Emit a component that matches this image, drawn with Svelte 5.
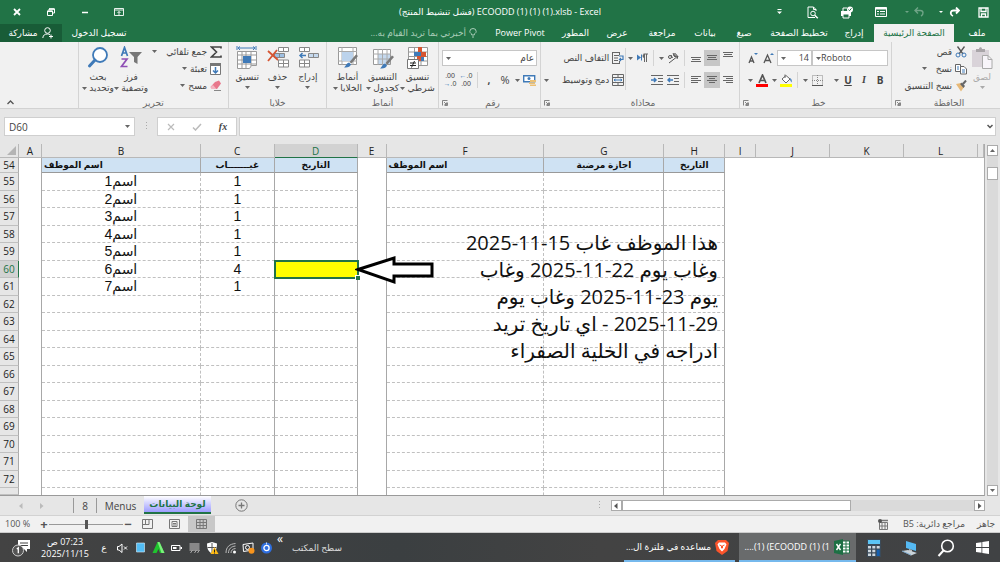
<script>
  const tabs = [
    { label: 'ملف', w: 46 },
    { label: 'الصفحة الرئيسية', w: 80, active: true },
    { label: 'إدراج', w: 40 },
    { label: 'تخطيط الصفحة', w: 70 },
    { label: 'صيغ', w: 40 },
    { label: 'بيانات', w: 38 },
    { label: 'مراجعة', w: 48 },
    { label: 'عرض', w: 42 },
    { label: 'المطور', w: 41 },
    { label: 'Power Pivot', w: 70 }
  ];
  const cols = ['A', 'B', 'C', 'D', 'E', 'F', 'G', 'H', 'I', 'J', 'K', 'L', ''];
  const heads = { B: 'اسم الموظف', C: 'غيـــــــاب', D: 'التاريخ', F: 'اسم الموظف', G: 'اجازة مرضية', H: 'التاريخ' };
  const counts = [1, 1, 1, 1, 1, 4, 1];
  const rows = Array.from({ length: 20 }, (_, i) => 54 + i);

  function value(r, c) {
    if (r === 54) return heads[c] ?? '';
    const n = r - 55;
    if (n < 0 || n > 6) return '';
    if (c === 'B') return 'اسم' + (n + 1);
    if (c === 'C') return String(counts[n]);
    return '';
  }

  let zoom = $state(50);
  let formula = $state('');
  let cellRef = $state('D60');
</script>

{#snippet caret()}
  <svg class="caret" width="5" height="3" viewBox="0 0 5 3"><path d="M0 0h5L2.5 3z" fill="currentColor" /></svg>
{/snippet}

{#snippet launcher()}
  <svg width="6" height="6" viewBox="0 0 6 6" fill="none" stroke="#777"><path d="M.5 5.500V.5h5M5.500 2.500v3H2.500M2 2l2.500 2.500M4.500 2.500v2h-2" stroke-width=".9" /></svg>
{/snippet}

{#snippet lines(widths, align)}
  <svg width="12" height="12" viewBox="0 0 12 12">
    {#each widths as w, i}
      <rect x={align === 'r' ? 11 - w : align === 'c' ? 6 - w / 2 : 1} y={i * 2 + (widths.length === 3 ? 3 : 2)} width={w} height="1" fill="#666" />
    {/each}
  </svg>
{/snippet}

{#snippet brush(x, y)}
  <g transform={`translate(${x} ${y})`}>
    <path d="M12 0.500L14 2 7.500 9.500 5.500 8z" fill="#7a7a7a" />
    <path d="M5 8.500l2 1.800c-.8 2.700-3.500 3.700-7 3.200 2-1.200 1.800-4 5-5z" fill="#3f7ab8" />
  </g>
{/snippet}

<div class="app">
  <header class="title" dir="ltr">
    <div class="wins">
      <button aria-label="Close"><svg width="8" height="8" viewBox="0 0 8 8"><path d="M1 1l6 6M7 1L1 7" stroke="#fff" stroke-width="1.800" /></svg></button>
      <button aria-label="Restore"><svg width="8" height="8" viewBox="0 0 8 8" fill="none" stroke="#fff"><path d="M2 2V1h5.500v4H6M.5 3h5v4.500h-5z" /><path d="M2 1h5.500M.5 3.200h5" stroke-width="1.500" /></svg></button>
      <button aria-label="Minimize"><svg width="8" height="8" viewBox="0 0 8 8"><path d="M1 4.500h6" stroke="#fff" stroke-width="1.500" /></svg></button>
      <button aria-label="Ribbon display"><svg width="10" height="8" viewBox="0 0 10 8" fill="none" stroke="#fff"><path d="M.5.5h9v7h-9zM.5 2h9M5 7V3.500M3.500 5L5 3.500 6.500 5" stroke-width=".9" /></svg></button>
    </div>
    <h1>(فشل تنشيط المنتج) ECOODD (1) (1) (1).xlsb - Excel</h1>
    <div class="quick">
      <button aria-label="Customize"><svg width="5" height="6" viewBox="0 0 5 6" fill="#fff"><path d="M.5 0h4v1h-4zM0 2.500h5L2.500 5z" /></svg></button>
      <button aria-label="Preview"><svg width="12" height="13" viewBox="0 0 12 13" fill="none" stroke="#fff"><path d="M8 11.500H1V1h5.500L9 3.500V5M6.500 1v2.500H9" /><circle cx="6" cy="7.500" r="2.300" /><path d="M7.800 9.200l3 3" stroke-width="1.500" /></svg></button>
      <button aria-label="Quick print"><svg width="14" height="13" viewBox="0 0 14 13"><path d="M1 5h10v5H1z" fill="#fff" /><path d="M3 5V2h4M3 8h6v4H3z" stroke="#fff" fill="#217346" /><circle cx="10" cy="3.500" r="3" fill="#fff" /><path d="M8.500 3.500l1 1.200 2-2.400" stroke="#217346" fill="none" /></svg></button>
      <button aria-label="Form"><svg width="12" height="10" viewBox="0 0 12 10" fill="none" stroke="#fff"><path d="M.5.5h11v9H.5z" /><path d="M.5 1.500h11" stroke-width="2" /><path d="M2 4.500h2M5 4.500h5M2 7h2M5 7h5" /></svg></button>
      <button aria-label="Undo" class="dim"><svg width="20" height="10" viewBox="0 0 20 10"><path d="M0 4h4L2 6z" fill="#fff" /><path d="M13 .5L10 3.500l3 3M10.500 3.500h5c3 0 3.500 4 .5 5.500" stroke="#fff" stroke-width="1.400" fill="none" /></svg></button>
      <button aria-label="Redo"><svg width="21" height="10" viewBox="0 0 21 10"><path d="M0 4h4L2 6z" fill="#fff" /><path d="M17 .5l3 3-3 3M19.500 3.500h-5c-3 0-4 4-.5 5.500" stroke="#fff" stroke-width="1.800" fill="none" /></svg></button>
      <button aria-label="Save"><svg width="11" height="11" viewBox="0 0 11 11" fill="none" stroke="#fff"><path d="M1 1h9v9H1zM3 1v3.500h5V1M3.500 10V7h4v3" stroke-width="1.300" /></svg></button>
    </div>
  </header>

  <nav class="tabs">
    {#each tabs as t}
      <button class:active={t.active} style:width={t.w + 'px'}>{t.label}</button>
    {/each}
    <button class="tell"><svg width="8" height="10" viewBox="0 0 8 10" fill="none" stroke="#a9cdb8"><path d="M2.700 7V6C1.500 5.200.8 4.500.8 3.500a3.200 3 0 0 1 6.400 0c0 1-.7 1.700-1.900 2.500v1zM3 9h2" /></svg>أخبرني بما تريد القيام به...</button>
    <span class="grow"></span>
    <button class="signin">تسجيل الدخول</button>
    <button class="share"><svg width="12" height="12" viewBox="0 0 12 12" fill="none" stroke="#fff"><circle cx="5.500" cy="3.500" r="2.800" /><path d="M.8 11c.4-3 2-4 4.700-4 1 0 1.800.2 2.500.6M9 7.500v4M7 9.500h4" /></svg>مشاركة</button>
  </nav>

  <section class="ribbon">
    <div class="group clip">
      <div class="body">
        <button class="big off">
          <svg width="22" height="24" viewBox="0 0 22 24"><path d="M1 4h17v17H1z" fill="#d9d3d9" /><path d="M5 3h3c0-2.500 3-2.500 3 0h3v3H5z" fill="#a9a5a9" /><path d="M11.500 9.500H17l4 4v9h-9.500z" fill="#f8f5fa" stroke="#aaa" /><path d="M17 9.500v4h4" fill="none" stroke="#aaa" /></svg>
          <span>لصق</span>{@render caret()}
        </button>
        <div class="stack">
          <button><svg width="12" height="12" viewBox="0 0 12 12" fill="none"><path d="M2.500.5L8 8M9.500.5L4 8" stroke="#555" stroke-width="1.300" /><circle cx="3" cy="9" r="2" stroke="#3f7ab8" /><circle cx="9" cy="9" r="2" stroke="#3f7ab8" /></svg>قص</button>
          <button><svg width="12" height="12" viewBox="0 0 12 12" fill="#fff" stroke="#666"><path d="M.5 1.500h5v7h-5z" /><path d="M5.500 3.500H9l2.500 2.500v5h-6z" /><path d="M2 4h2M2 6h2M7 7h3M7 9h3" stroke="#3f7ab8" /></svg>نسخ<i></i>{@render caret()}</button>
          <button><svg width="12" height="12" viewBox="0 0 12 12"><path d="M1 4l5-1 3 4-3 4.500z" fill="#e7b978" /><path d="M5 4l2-1.500 3 3.500L8.500 8z" fill="#666" /><path d="M8 4l3-3.500" stroke="#666" stroke-width="2" /></svg>نسخ التنسيق</button>
        </div>
      </div>
      <footer><span>الحافظة</span>{@render launcher()}</footer>
    </div>

    <div class="group font">
      <div class="rows">
        <div class="row">
          <span class="combo name"><select aria-label="Font" dir="ltr"><option>Roboto</option></select>{@render caret()}</span>
          <span class="combo size"><select aria-label="Font size" dir="ltr"><option>14</option></select>{@render caret()}</span>
          <button class="ic" aria-label="Grow font"><svg width="12" height="12" viewBox="0 0 12 12"><path d="M1 11l3.500-8L8 11M2.200 8.500h4.600" fill="none" stroke="#555" stroke-width="1.300" /><path d="M7 3l2-2 2 2z" fill="#3f7ab8" /></svg></button>
          <button class="ic" aria-label="Shrink font"><svg width="12" height="12" viewBox="0 0 12 12"><path d="M2 11l2.500-6L7 11M3 9h3" fill="none" stroke="#555" stroke-width="1.300" /><path d="M7 1h4L9 3z" fill="#3f7ab8" /></svg></button>
        </div>
        <div class="row">
          <button class="ic"><b>B</b></button>
          <button class="ic"><em>I</em></button>
          <button class="ic"><u>U</u></button>
          <button class="dd" aria-label="Underline styles">{@render caret()}</button>
          <i></i>
          <button class="ic" aria-label="Borders"><svg width="11" height="11" viewBox="0 0 11 11"><path d="M.5.5h10v10H.5zM5.500 0v10M0 5.500h11" fill="none" stroke="#888" stroke-dasharray="1 1" /><path d="M0 10.500h11" stroke="#555" /></svg></button>
          <button class="dd" aria-label="Border styles">{@render caret()}</button>
          <i class="sep"></i>
          <button class="ic" aria-label="Fill colour"><svg width="13" height="13" viewBox="0 0 13 13"><path d="M2 5l4-3.500L10 5 6 9z" fill="#fff" stroke="#666" /><path d="M5 4V0.500" stroke="#666" /><path d="M10 4c2 1 2 3 1.500 4.500C10.500 7 10 6 10 4z" fill="#3f7ab8" /><path d="M0 10h12v3H0z" fill="#ff0" /></svg></button>
          <button class="dd" aria-label="Fill choices">{@render caret()}</button>
          <button class="ic" aria-label="Font colour"><svg width="13" height="13" viewBox="0 0 13 13"><path d="M3 9l3.500-8L10 9M4.200 6.500h4.600" fill="none" stroke="#555" stroke-width="1.700" /><path d="M0 10h12v3H0z" fill="#f00" /></svg></button>
          <button class="dd" aria-label="Colour choices">{@render caret()}</button>
        </div>
      </div>
      <footer><span>خط</span>{@render launcher()}</footer>
    </div>

    <div class="group align">
      <div class="body">
        <div class="rows left">
          <div class="row">
            <button class="ic up" aria-label="Top">{@render lines([10, 8, 10], 'c')}</button>
            <button class="ic on" aria-label="Middle">{@render lines([10, 8, 10], 'c')}</button>
            <button class="ic down" aria-label="Bottom">{@render lines([10, 8, 10], 'c')}</button>
            <i class="sep"></i>
            <button class="ic" aria-label="Orientation"><svg width="12" height="12" viewBox="0 0 12 12" fill="none" stroke="#555"><path d="M2 11L11 4M11 4L8 4.500M11 4L10 7" /><circle cx="3" cy="5" r="1.500" /><path d="M4 3l1.500 3M6 1l2 4" /><circle cx="8" cy="3" r="1.300" /></svg></button>
            <button class="dd" aria-label="Orientation choices">{@render caret()}</button>
            <i class="sep"></i>
            <button class="ic" aria-label="Direction"><svg width="11" height="10" viewBox="0 0 11 10"><path d="M0 1.500l4 3-4 3zM4 1.500h1v6H4z" fill="#3f7ab8" /><path d="M7.500 9V1M9.500 9V1M6.500 1H11" stroke="#666" fill="none" /><path d="M7.500 1a1.800 1.800 0 0 0 0 4z" fill="#666" /></svg></button>
            <button class="dd" aria-label="Direction choices">{@render caret()}</button>
          </div>
          <div class="row">
            <button class="ic" aria-label="Align right">{@render lines([10, 7, 10, 7], 'r')}</button>
            <button class="ic on" aria-label="Centre">{@render lines([10, 6, 10, 6], 'c')}</button>
            <button class="ic" aria-label="Align left">{@render lines([10, 7, 10, 7], 'l')}</button>
            <i class="sep"></i>
            <button class="ic" aria-label="Outdent"><svg width="12" height="11" viewBox="0 0 12 11"><path d="M0 .5h12M7 3.500h5M7 6.500h5M0 9.500h12" stroke="#666" /><path d="M6 5H1M3 3L1 5l2 2" stroke="#3f7ab8" fill="none" stroke-width="1.500" /></svg></button>
            <button class="ic" aria-label="Indent"><svg width="12" height="11" viewBox="0 0 12 11"><path d="M0 .5h12M7 3.500h5M7 6.500h5M0 9.500h12" stroke="#666" /><path d="M0 5h5M3 3l2 2-2 2" stroke="#3f7ab8" fill="none" stroke-width="1.500" /></svg></button>
          </div>
        </div>
        <i class="sep tall"></i>
        <div class="rows">
          <button class="row wide"><svg width="12" height="12" viewBox="0 0 12 12" fill="none"><path d="M.5 0v12M.5.5h7M.5 11.500h7M7.500 0v3M7.500 9v3M2 3.500h5M2 6h4M2 8.500h4" stroke="#666" /><path d="M7 4h4v3.500H7.500M9 6L7.500 7.500 9 9" stroke="#3f7ab8" stroke-width="1.200" /></svg>التفاف النص</button>
          <button class="row wide"><svg width="12" height="12" viewBox="0 0 12 12" fill="none" stroke="#666"><path d="M.5.5h11v11H.5zM.5 3.500h11M.5 8.500h11M6 0v3M6 9v3" /><path d="M2 6h8M3.500 5L2 6l1.500 1M8.500 5L10 6 8.500 7" stroke="#3f7ab8" /></svg>دمج وتوسيط<i></i>{@render caret()}</button>
        </div>
      </div>
      <footer><span>محاذاة</span>{@render launcher()}</footer>
    </div>

    <div class="group number">
      <div class="rows">
        <div class="row"><span class="combo fmt"><select aria-label="Number format"><option>عام</option></select>{@render caret()}</span></div>
        <div class="row">
          <button class="ic" aria-label="Currency"><svg width="13" height="12" viewBox="0 0 13 12"><path d="M.7 1.700h11v6h-11z" fill="#fff" stroke="#3f7ab8" stroke-width="1.400" /><circle cx="6" cy="4.500" r="1.500" fill="#3f7ab8" /><path d="M7 6h6v2H7zM6 8.500h6v1.500H6zM7 10.500h6V12H7z" fill="#ecc074" /></svg></button>
          <button class="dd" aria-label="Currency choices">{@render caret()}</button>
          <button class="ic pct">%</button>
          <button class="ic pct"><b>,</b></button>
          <i class="sep"></i>
          <button class="ic dec" aria-label="Increase decimal"><small><s>←</s>.0</small><small>.00</small></button>
          <button class="ic dec" aria-label="Decrease decimal"><small>.00</small><small><s>→</s>.0</small></button>
        </div>
      </div>
      <footer><span>رقم</span>{@render launcher()}</footer>
    </div>

    <div class="group styles">
      <div class="body">
        <button class="big">
          <svg width="22" height="24" viewBox="0 0 22 24"><path d="M1.500 1.500h19v18h-19zM7.500 1v18M14 1v18M1 6h20M1 10.500h20M1 15h20" fill="#fff" stroke="#999" /><path d="M11 1h4v5h-4zM14 6h5v5h-5zM10 10h4v5h-4z" fill="#d65532" /><path d="M7 6h7v4H7zM14 11h3v4h-3z" fill="#3f7ab8" /><path d="M.5 13.500h11v9H.5z" fill="#fff" stroke="#777" /><path d="M3 17h6M3 19.500h6M7.500 15l-3 6.500" stroke="#222" /></svg>
          <span>تنسيق</span><span>شرطي {@render caret()}</span>
        </button>
        <button class="big">
          <svg width="22" height="24" viewBox="0 0 22 24"><path d="M1.500 3.500h17v15h-17z" fill="#fff" stroke="#999" /><path d="M6 8h12v10H6z" fill="#c5d9ee" /><path d="M1 8h18M1 13h18M6 3v16M10.500 3v16M15 3v16" stroke="#aaa" />{@render brush(8, 9)}</svg>
          <span>التنسيق</span><span>كجدول {@render caret()}</span>
        </button>
        <button class="big">
          <svg width="22" height="24" viewBox="0 0 22 24"><path d="M1.500 1.500h18v17h-18z" fill="#fff" stroke="#999" /><path d="M1 5.500h19M1 15h19M5 1v18M16 1v18" stroke="#aaa" /><path d="M5 6h11v9H5z" fill="#bcd3ec" />{@render brush(7, 8)}</svg>
          <span>أنماط</span><span>الخلايا {@render caret()}</span>
        </button>
      </div>
      <footer><span>أنماط</span></footer>
    </div>

    <div class="group cells">
      <div class="body">
        <button class="big">
          <svg width="22" height="24" viewBox="0 0 22 24" fill="#fff" stroke="#888"><path d="M2.500 1.500h10v4h-10zM7.500 1.500v4M2.500 14h10v7h-10zM7.500 14v7M2.500 17.500h10" /><path d="M11.500 7.500h10v4h-10zM16.500 7.500v4" fill="#c5d9ee" /><path d="M9 9.500H3M5.500 7L3 9.500 5.500 12" stroke="#3f7ab8" stroke-width="1.500" fill="none" /></svg>
          <span>إدراج</span>{@render caret()}
        </button>
        <button class="big">
          <svg width="22" height="24" viewBox="0 0 22 24" fill="#fff" stroke="#888"><path d="M11.500 1.500h10v4h-10zM16.500 1.500v4M11.500 14h10v7h-10zM16.500 14v7M11.500 17.500h10" /><path d="M7.500 7.500h10v4h-10zM12.500 7.500v4" fill="#9fc0e2" /><path d="M1 5l10 9M10 4L1 15" stroke="#d65532" stroke-width="1.800" fill="none" /></svg>
          <span>حذف</span>{@render caret()}
        </button>
        <button class="big">
          <svg width="22" height="24" viewBox="0 0 22 24" fill="#fff" stroke="#999"><path d="M1.500 5.500h19v14h-5l-2 3h-12zM6 5v17M10 5v17M15 5v15M1 9h20M1 14h20M1 18h20" /><path d="M7 10h8v7H7z" fill="#3f7ab8" stroke="none" /><path d="M2 2h17M4 .5L2 2l2 2M17 .5L19 2l-2 2M1 0v4M20 0v4" stroke="#3f7ab8" fill="none" /></svg>
          <span>تنسيق</span>{@render caret()}
        </button>
      </div>
      <footer><span>خلايا</span></footer>
    </div>

    <div class="group edit">
      <div class="body">
        <div class="stack">
          <button><svg width="12" height="12" viewBox="0 0 12 12"><path d="M11 2.500V1H1.500l5 5-5 5H11V9.500" fill="none" stroke="#444" stroke-width="1.600" /></svg>جمع تلقائي<i></i>{@render caret()}</button>
          <button><svg width="12" height="12" viewBox="0 0 12 12"><path d="M.5.5h10v11H.5z" fill="#fff" stroke="#777" /><path d="M0 0h11v3H0z" fill="#777" /><path d="M5.500 4v6M3 7.500l2.500 2.500L8 7.500" stroke="#3f7ab8" stroke-width="1.500" fill="none" /></svg>تعبئة {@render caret()}</button>
          <button><svg width="12" height="12" viewBox="0 0 12 12"><path d="M5 2l4-1.500 2 3L7 9 2 9 0.500 7z" fill="#e8788c" /><path d="M3 5l3.500 4H2L.5 7z" fill="#f4b4c0" /><path d="M4 10.500h7" stroke="#888" /></svg>مسح {@render caret()}</button>
        </div>
        <button class="big">
          <svg width="22" height="24" viewBox="0 0 22 24" fill="none"><path d="M1.500 10L4.500 1.500 7.500 10M2.500 7h4" stroke="#3f7ab8" stroke-width="1.700" /><path d="M1.500 13H7L1.500 20.500h6" stroke="#8f4fb5" stroke-width="1.700" /><path d="M9 6h13l-4.500 5v7l-3.500-2v-5z" fill="#777" /></svg>
          <span>فرز</span><span>وتصفية {@render caret()}</span>
        </button>
        <button class="big">
          <svg width="22" height="24" viewBox="0 0 22 24"><circle cx="13" cy="9" r="7" fill="#fff" stroke="#3f7ab8" stroke-width="1.800" /><path d="M8 14l-5.500 6" stroke="#3f7ab8" stroke-width="3" stroke-linecap="round" /></svg>
          <span>بحث</span><span>وتحديد {@render caret()}</span>
        </button>
      </div>
      <footer><span>تحرير</span></footer>
    </div>
    <button class="collapse" aria-label="Collapse ribbon"><svg width="7" height="5" viewBox="0 0 7 5"><path d="M.5 4l3-3 3 3" fill="none" stroke="#555" stroke-width="1.300" /></svg></button>
  </section>

  <section class="fbar" dir="ltr">
    <label class="namebox"><input aria-label="Name box" bind:value={cellRef} />{@render caret()}</label>
    <span class="dots"></span>
    <div class="fx">
      <button aria-label="Cancel"><svg width="8" height="8" viewBox="0 0 8 8"><path d="M1 1l6 6M7 1L1 7" stroke="#bbb" stroke-width="1.200" /></svg></button>
      <button aria-label="Enter"><svg width="10" height="8" viewBox="0 0 10 8"><path d="M1 4.500L3.500 7 9 1" fill="none" stroke="#bbb" stroke-width="1.500" /></svg></button>
      <button aria-label="Insert function" class="fn">fx</button>
    </div>
    <label class="formula"><input aria-label="Formula" bind:value={formula} /><svg width="6" height="5" viewBox="0 0 6 5"><path d="M.5 1L3 3.500 5.500 1" fill="none" stroke="#555" stroke-width="1.500" /></svg></label>
  </section>

  <main class="sheet" dir="ltr">
    <div class="canvas">
      <table>
        <thead>
          <tr>
            <th class="corner"><svg width="9" height="9" viewBox="0 0 9 9"><path d="M9 0v9H0z" fill="#b4b4b4" /></svg></th>
            {#each cols as c}<th class="col" class:cur={c === 'D'}>{c}</th>{/each}
          </tr>
        </thead>
        <tbody>
          {#each rows as r}
            <tr class:head={r === 54} class:last={r === 73}>
              <th class="num" class:cur={r === 60}>{r < 73 ? r : ''}</th>
              {#each cols as c}
                <td class={'c' + c} class:sel={r === 60 && c === 'D'} dir="rtl">{value(r, c)}</td>
              {/each}
            </tr>
          {/each}
        </tbody>
      </table>
      <svg class="arrow" width="80" height="32" viewBox="0 0 80 32"><path d="M3 15.500L39 4v6h38v12H39v6z" fill="#fff" stroke="#000" stroke-width="3" /></svg>
      <p class="note" dir="rtl">هذا الموظف غاب 15-11-2025<br />وغاب يوم 22-11-2025 وغاب<br />يوم 23-11-2025 وغاب يوم<br />2025-11-29 - اي تاريخ تريد<br />ادراجه في الخلية الصفراء</p>
    </div>
    <div class="vscroll">
      <button aria-label="Up"><svg width="5" height="3" viewBox="0 0 5 3"><path d="M0 3h5L2.500 0z" fill="#666" /></svg></button>
      <span class="track"><span></span></span>
      <button aria-label="Down">{@render caret()}</button>
    </div>
  </main>

  <section class="sheets" dir="ltr">
    <div class="nav"><svg width="4" height="6" viewBox="0 0 4 6"><path d="M3.500 0v6L0 3z" fill="#bbb" /></svg><svg width="4" height="6" viewBox="0 0 4 6"><path d="M0 0v6l3.500-3z" fill="#bbb" /></svg></div>
    <button class="st eight">8</button>
    <button class="st menus">Menus</button>
    <button class="st act">لوحة البيانات</button>
    <button class="add" aria-label="Add sheet"><svg width="13" height="13" viewBox="0 0 13 13" fill="none" stroke="#777"><circle cx="6.500" cy="6.500" r="5.700" /><path d="M6.500 3.500v6M3.500 6.500h6" stroke-width="1.300" /></svg></button>
    <span class="grow"></span>
    <span class="dots"></span>
    <div class="hscroll">
      <button aria-label="Left"><svg width="4" height="6" viewBox="0 0 4 6"><path d="M3.500 0v6L0 3z" fill="#555" /></svg></button>
      <span class="track"><span></span></span>
      <button aria-label="Right"><svg width="4" height="6" viewBox="0 0 4 6"><path d="M0 0v6l3.500-3z" fill="#555" /></svg></button>
    </div>
  </section>

  <section class="status" dir="ltr">
    <span class="pc">100 %</span>
    <button class="z">+</button>
    <input type="range" aria-label="Zoom" min="0" max="100" bind:value={zoom} />
    <button class="z">−</button>
    <button class="view" aria-label="Page break"><svg width="11" height="10" viewBox="0 0 11 10" fill="none" stroke="#777"><path d="M.5.5h10v9H.5zM3.500 0v5M.5 5.500h6.500V0" /></svg></button>
    <button class="view" aria-label="Page layout"><svg width="11" height="10" viewBox="0 0 11 10" fill="none" stroke="#777"><path d="M.5.5h10v9H.5zM3 2.500h5v5H3zM4 4.500h3M4 6h3" /></svg></button>
    <button class="view on" aria-label="Normal"><svg width="11" height="10" viewBox="0 0 11 10" fill="none" stroke="#777"><path d="M.5.5h10v9H.5zM4 0v10M7.200 0v10M0 3.500h11M0 6.500h11" /></svg></button>
    <span class="grow"></span>
    <svg width="10" height="11" viewBox="0 0 10 11" fill="none" stroke="#777"><path d="M1.500 3.500h8v7h-8zM4 4v6M7 4v6M2 7h7" /><path d="M3 1.500h7" stroke-width="1.500" /><circle cx="2" cy="2" r="2" fill="#555" stroke="none" /></svg>
    <span class="circ" dir="rtl">مراجع دائرية: B5</span>
    <span>جاهز</span>
  </section>

  <footer class="task" dir="ltr">
    <svg class="bell" width="20" height="18" viewBox="0 0 20 18"><path d="M6 1h12v9h-3v3l-3-3H6z" fill="#fff" /><path d="M8 4h8M8 6.500h8" stroke="#444" /><circle cx="6" cy="11.500" r="5.500" fill="#555" stroke="#ccc" /><path d="M4.800 10l1.500-1.200v5.500" stroke="#fff" fill="none" stroke-width="1.300" /></svg>
    <time><span dir="rtl">07:23 ص</span><span>2025/11/15</span></time>
    <div class="tray">
      <span class="lang">ع</span>
      <svg width="12" height="12" viewBox="0 0 12 12" fill="none" stroke="#fff"><path d="M1 4.500h1.500L5.500 2v8.500L2.500 8H1zM7.500 4.500l3 3M10.500 4.500l-3 3" /></svg>
      <svg width="12" height="12" viewBox="0 0 12 12"><path d="M2 1h8v9H2z" fill="#52bdf5" stroke="#d8eefa" stroke-width=".6" /></svg>
      <svg width="12" height="12" viewBox="0 0 12 12"><path d="M5 0h2l5 11H7.500L6 7l-2 4H0z" fill="#1fc42e" /><path d="M5 0h2l5 11H9z" fill="#7df07d" /></svg>
      <svg width="12" height="12" viewBox="0 0 12 12"><path d="M1 3.500h8.500v5H1z" fill="none" stroke="#fff" /><path d="M2.500 5h3.500v2H2.500zM10 5h1.500v2H10z" fill="#fff" /></svg>
      <svg width="12" height="12" viewBox="0 0 12 12"><path d="M1 1h10v8H1z" fill="#888" /><path d="M2 11l2-3M6 11l2-3M9 11l2-3" stroke="#aaa" /></svg>
      <svg width="12" height="12" viewBox="0 0 12 12"><path d="M5.500 0l5 1.500c0 5-1 8-5 10-4-2-5-5-5-10z" fill="#fff" /><path d="M5.500 1v10M1 5.500h9" stroke="#555" /><path d="M8 5l4 7H4z" fill="#fdb913" /><path d="M8 7.500v2.500M8 10.500v1" stroke="#222" /></svg>
      <svg width="12" height="12" viewBox="0 0 12 12" fill="none" stroke="#bbb"><path d="M1.500 11C1.500 5 5 2 11 1.500M4 11c0-4 2.500-6.500 7-7M6.500 11c0-2.500 1.500-4.200 4.500-4.500" /><circle cx="10" cy="10" r="1.500" fill="#fff" stroke="none" /></svg>
      <svg width="12" height="12" viewBox="0 0 12 12"><path d="M.5 2.500l10-1.500v7L1 9.500z" fill="none" stroke="#fff" /><circle cx="5" cy="5.500" r="2" fill="none" stroke="#fff" /><circle cx="9" cy="8.800" r="3" fill="#f7941d" /></svg>
      <svg width="12" height="12" viewBox="0 0 12 12"><circle cx="6" cy="6" r="5.500" fill="#2f6fe0" /><circle cx="6" cy="6" r="2.600" fill="none" stroke="#fff" stroke-width="1.300" /><path d="M6 .5v2" stroke="#cde" /></svg>
    </div>
    <span class="more">«</span>
    <span class="desk">سطح المكتب</span>
    <span class="grow"></span>
    <button class="win"><span dir="rtl">مساعده في فلترة ال...</span><svg width="14" height="16" viewBox="0 0 14 16"><path d="M3 1h8l3 3-1.500 8L7 16l-5.500-4L0 4z" fill="#fb542b" /><path d="M4 3.500h6l1.500 2-2 4.500L7 12.500 4.500 10l-2-4.500z" fill="#fff" /><path d="M4.500 6l2 .8v2.500M9.500 6l-2 .8v2.500" stroke="#fb542b" fill="none" /></svg></button>
    <button class="win act"><span>....(1) (ECOODD (1) (1</span><svg width="16" height="16" viewBox="0 0 16 16"><path d="M8 2h7.500v12H8z" fill="#fff" stroke="#217346" /><path d="M9 5h6M9 8h6M9 11h6M12 2v12" stroke="#217346" /><path d="M0 2l9-2v16l-9-2z" fill="#1d7044" /><path d="M2.500 5l4 6M6.500 5l-4 6" stroke="#fff" stroke-width="1.400" /></svg></button>
    <button class="pin" aria-label="Calculator"><svg width="14" height="18" viewBox="0 0 14 18"><path d="M0 0h14v18H0z" fill="#3b4a58" /><path d="M1 1h12v4H1z" fill="#5cc5f5" /><path d="M1 7h3v2.500H1zM5.300 7h3v2.500h-3zM9.700 7h3v2.500h-3zM1 10.700h3v2.500H1zM5.300 10.700h3v2.500h-3zM1 14.400h3v2.500H1zM5.300 14.400h3v2.500h-3z" fill="#cfd8df" /><path d="M9.700 10.700h3V17h-3z" fill="#1660b0" /></svg></button>
    <button class="pin" aria-label="This PC"><svg width="18" height="16" viewBox="0 0 18 16"><path d="M5 1l10 3v7L5 8z" fill="#55b9f3" /><path d="M8 9l3 1v2H8z" fill="#bbb" /><path d="M1 11l6-1 9 3-6 2.500z" fill="#c9d3da" /><path d="M1 11l9 4" stroke="#7ea9cc" /></svg></button>
    <button class="pin" aria-label="Search"><svg width="18" height="18" viewBox="0 0 18 18" fill="none" stroke="#fff"><circle cx="10.500" cy="7" r="5.800" stroke-width="1.600" /><path d="M6.500 11.500L1.500 17" stroke-width="2" /></svg></button>
    <button class="pin" aria-label="Start"><svg width="13" height="13" viewBox="0 0 13 13" fill="#fff"><path d="M0 2l5.500-.8V6H0zM6.300 1L13 0v6H6.300zM0 7h5.500v4.800L0 11zM6.300 7H13v6l-6.700-1z" /></svg></button>
  </footer>
</div>

<style>
  :global(body) { margin: 0; }
  .app {
    --blue: #3f7ab8;
    display: flex; flex-direction: column; height: 100vh; min-height: 480px; overflow: hidden;
    direction: rtl; background: #e6e6e6; color: #444;
    font: 9px/12px "Open Sans", "DejaVu Sans", sans-serif; white-space: nowrap;
  }
  button, input, select { font: inherit; color: inherit; margin: 0; padding: 0; border: 0; background: none; border-radius: 0; }
  button { display: flex; align-items: center; justify-content: center; white-space: nowrap; }
  svg { flex: none; display: block; }
  .grow { flex: 1; }
  .caret { display: inline-block; color: #666; }

  .title { display: flex; align-items: center; justify-content: space-between; height: 24px; background: #217346; color: #fff; }
  .title h1 { margin: 0; font-size: 9px; font-weight: 400; }
  .wins, .quick { display: flex; flex: 1; }
  .wins button { width: 34px; height: 24px; }
  .quick { justify-content: flex-end; }
  .quick button { width: 34px; height: 24px; }
  .dim { opacity: .35; }

  .tabs { display: flex; height: 18px; background: #217346; color: #fff; }
  .tabs .active { background: #f1f1f1; color: #217346; }
  .tabs .tell { gap: 3px; margin-right: 8px; color: #a9cdb8; }
  .tabs .signin { width: 74px; }
  .tabs .share { width: 62px; gap: 4px; background: #185c37; }

  .ribbon { display: flex; height: 66px; background: #f1f1f1; border-bottom: 1px solid #d2d2d2; }
  .group { display: flex; flex-direction: column; box-sizing: border-box; padding: 1px 3px 0; border-left: 1px solid #d4d4d4; }
  .group footer { display: flex; justify-content: center; align-items: center; height: 10px; color: #666; margin-top: auto; }
  .group footer span { flex: 1; text-align: center; }
  .body { display: flex; }
  .clip { width: 109px; }
  .font { width: 152px; }
  .align { width: 199px; }
  .number { width: 102px; }
  .styles { width: 112px; }
  .cells { width: 98px; }
  .edit { width: 150px; }
  .big { flex-direction: column; justify-content: flex-start; flex: 1; height: 50px; line-height: 11px; margin-top: 3px; }
  .big svg:first-child { margin-bottom: 1px; }
  .big > .caret { margin-top: 4px; }
  .off, .off .caret { color: #aaa; }
  .stack { display: flex; flex-direction: column; align-items: flex-start; }
  .stack button { height: 17px; gap: 3px; }
  .stack i { width: 3px; }
  .clip .stack { width: 72px; }
  .clip .big { flex: none; width: 30px; }
  .edit .stack { width: 74px; padding-right: 3px; }
  .rows { display: flex; flex-direction: column; gap: 6px; padding-top: 7px; }
  .row { display: flex; align-items: center; height: 16px; }
  .rows.left { width: 110px; }
  .row > i { width: 7px; }
  .row .sep { display: block; width: 7px; height: 16px; background: linear-gradient(#d4d4d4, #d4d4d4) center / 1px 100% no-repeat; }
  .sep.tall { width: 7px; height: 42px; margin-top: 5px; background: linear-gradient(#d4d4d4, #d4d4d4) center / 1px 100% no-repeat; }
  .wide { gap: 3px; justify-content: flex-start; }
  .ic { width: 16px; height: 16px; }
  .dd { width: 8px; height: 16px; }
  .on { background: #c6c6c6; }
  .up { align-items: flex-start; }
  .up svg { margin-top: -1px; }
  .down { align-items: flex-end; }
  .ic b, .ic em, .ic u { font-size: 10px; font-weight: 700; }
  .ic em { font-family: "Liberation Serif", serif; }
  .ic.pct { font-size: 11px; }
  .dec { flex-direction: column; direction: ltr; }
  .dec small { font: 7px/8px "Liberation Sans", sans-serif; }
  .dec s { text-decoration: none; color: var(--blue); }
  .combo { position: relative; display: flex; height: 16px; box-sizing: border-box; border: 1px solid #c6c6c6; background: #fff; }
  .combo select { appearance: none; width: 100%; outline: none; padding: 0 8px; }
  .combo .caret { position: absolute; left: 3px; top: 6px; }
  .name { width: 76px; }
  .size { width: 35px; }
  .size select { padding: 0 2px; text-align: right; text-align-last: right; }
  .fmt { width: 96px; }
  .fmt select { padding: 0 2px; }
  .collapse { margin-right: auto; align-self: flex-end; width: 20px; height: 12px; }

  .fbar { display: flex; align-items: flex-start; padding: 8px 4px 8px; height: 19px; }
  .namebox, .fx, .formula { display: flex; align-items: center; box-sizing: border-box; height: 19px; background: #fff; border: 1px solid #cfcfcf; }
  .namebox { width: 131px; padding: 0 4px; }
  .namebox input { flex: 1; width: 80px; font-size: 10px; }
  .dots { width: 22px; height: 9px; align-self: center; background: repeating-linear-gradient(#aaa 0 1px, transparent 1px 3px) center / 1px 100% no-repeat; }
  .fx { width: 80px; margin-right: 2px; }
  .fx button { flex: 1; height: 17px; }
  .fx .fn { font: italic 700 10px "Liberation Serif", serif; }
  .formula { flex: 1; padding-right: 2px; }
  .formula input { flex: 1; }
  input, select { outline: none; }

  .sheet { flex: 1; min-height: 0; display: flex; }
  .canvas { position: relative; flex: 1; min-width: 0; overflow: hidden; border-right: 1px solid #ababab; border-bottom: 1px solid #9a9a9a; }
  table {
    display: grid; height: 100%; background: #fff; color: #111;
    grid-template-columns: 19px 23fr 159fr 74fr 83fr 29fr 158fr 120fr 61fr 31fr 74fr 74fr 74fr 6fr;
    grid-template-rows: 14px 15px repeat(18, minmax(0, 1fr)) 7px;
  }
  thead, tbody, tr { display: contents; }
  th, td { display: flex; align-items: center; justify-content: center; box-sizing: border-box; min-width: 0; min-height: 0; padding: 0; overflow: hidden; }
  th { background: #e6e6e6; font-weight: 400; font-size: 10px; color: #222; }
  .col { border-right: 1px solid #b8b8b8; border-bottom: 1px solid #b8b8b8; }
  .corner { justify-content: flex-end; border-right: 1px solid #b8b8b8; border-bottom: 1px solid #b8b8b8; padding-right: 2px; }
  .num { border-right: 1px solid #ababab; border-bottom: 1px solid #c0c0c0; }
  th.cur { background: #d2d2d2; color: #217346; }
  .col.cur { border-bottom: 1px solid #217346; }
  .num.cur { border-right: 1px solid #217346; }
  td { font: 14px/14px "Liberation Sans", "DejaVu Sans", sans-serif; }
  .cB, .cC, .cD, .cF, .cG, .cH { border-bottom: 1px dashed #c0c0c0; }
  .cA, .cE { border-right: 1px solid #a8a8a8; }
  .cB, .cF { border-right: 1px dashed #c0c0c0; }
  .cC, .cD, .cG, .cH { border-right: 1px solid #a8a8a8; }
  .head td { font-size: 9px; font-weight: 700; }
  .head .cB, .head .cC, .head .cD, .head .cF, .head .cG, .head .cH { background: #cfe2f3; border-bottom: 1px solid #999; }
  .head .cB, .head .cF { justify-content: flex-end; padding-left: 2px; border-right: 1px solid #a8a8a8; }
  .last td { border-bottom: 0; }
  td.sel { position: relative; background: #ff0; border: 0; outline: 2px solid #217346; outline-offset: -1px; overflow: visible; }
  td.sel::after { content: ''; position: absolute; right: -2px; bottom: -2px; width: 4px; height: 4px; background: #217346; border: 1px solid #fff; border-width: 1px 0 0 1px; }
  .arrow { position: absolute; left: 355px; top: 110px; }
  .note { position: absolute; left: 400px; width: 318px; top: 85px; margin: 0; color: #111; font: 20px/27px "Open Sans", "DejaVu Sans", sans-serif; }

  .vscroll { display: flex; flex-direction: column; width: 11px; margin: 1px 2px 0 2px; }
  .vscroll button, .hscroll button { box-sizing: border-box; width: 11px; height: 11px; background: #fff; border: 1px solid #ababab; flex: none; }
  .track { flex: 1; background: #dadada; display: flex; }
  .track span { box-sizing: border-box; background: #fff; border: 1px solid #ababab; }
  .vscroll .track span { width: 11px; height: 13px; margin-top: 11px; }

  .sheets { display: flex; align-items: center; height: 20px; padding-right: 15px; border-bottom: 1px solid #d2d2d2; box-sizing: border-box; font-size: 10px; }
  .nav { display: flex; width: 73px; gap: 17px; padding-left: 19px; box-sizing: border-box; }
  .st { height: 15px; border-left: 1px solid #999; }
  .eight { width: 23px; }
  .menus { width: 48px; }
  .st.act { width: 67px; height: 18px; align-self: flex-start; border: 0; border-bottom: 2px solid #217346; background: linear-gradient(#fff, #9c9cff); color: #217346; font-size: 9px; font-weight: 700; }
  .add { width: 60px; }
  .hscroll { display: flex; width: 38%; }
  .hscroll .track span { width: 65%; height: 11px; }

  .status { display: flex; align-items: center; height: 17px; padding: 0 5px; background: #f1f1f1; border-bottom: 1px solid #ccc; box-sizing: border-box; color: #555; }
  .pc { width: 34px; }
  .z { width: 10px; font-size: 13px; font-weight: 700; }
  input[type='range'] { appearance: none; width: 74px; height: 10px; background: linear-gradient(#999, #999) center / 100% 1px no-repeat; }
  input[type='range']::-webkit-slider-thumb { appearance: none; width: 3px; height: 9px; background: #555; }
  .view { width: 27px; height: 16px; }
  .z + .view { margin-left: 1px; }
  .view.on { background: #c8c8c8; }
  .circ { margin: 0 12px 0 15px; }

  .task { display: flex; align-items: center; height: 29px; background: linear-gradient(90deg, #434343, #3b3f41 40%, #434343 60%, #404244); color: #fff; }
  .bell { margin-left: 12px; }
  time { display: flex; flex-direction: column; align-items: center; width: 62px; margin-left: 2px; }
  .tray { display: flex; gap: 5px; align-items: center; margin-left: 1px; }
  .tray svg { width: 13px; height: 12px; }
  .lang { width: 14px; text-align: center; }
  .more { align-self: flex-start; width: 14px; text-align: center; font-size: 12px; }
  .desk { margin-left: 5px; color: #ddd; }
  .win { height: 29px; gap: 4px; box-sizing: border-box; justify-content: flex-end; width: 111px; padding-right: 6px; border-bottom: 2px solid #76b9ed; margin-right: 4px; }
  .win.act { width: 117px; background: #696b6c; margin-right: 0; }
  .pin { width: 36px; height: 29px; }
</style>
